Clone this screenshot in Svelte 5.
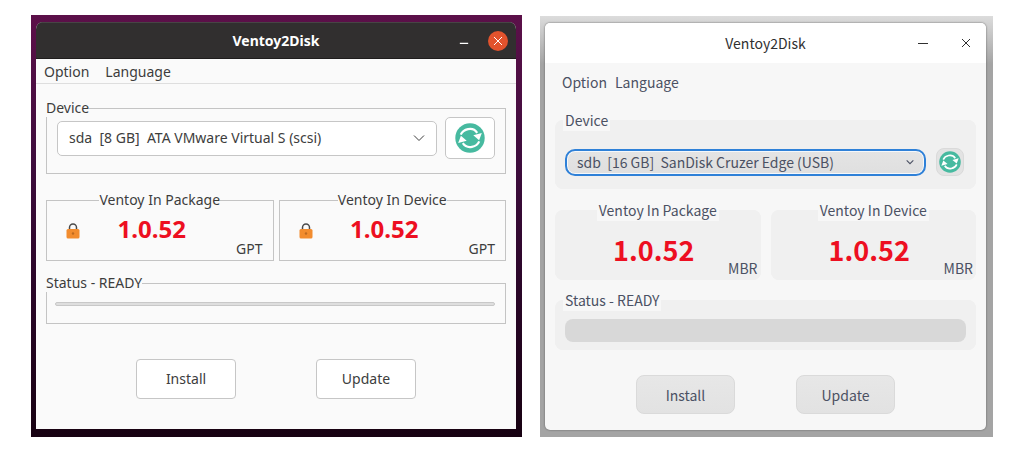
<script lang="ts">
	const windows = [
		{
			theme: 'yaru',
			device: 'sda\u00a0 [8 GB]\u00a0 ATA VMware Virtual S (scsi)',
			style: 'GPT',
			secure: true
		},
		{
			theme: 'deepin',
			device: 'sdb\u00a0 [16 GB]\u00a0 SanDisk Cruzer Edge (USB)',
			style: 'MBR',
			secure: false
		}
	];
	const version = '1.0.52';
	const versionBoxes = ['Ventoy In Package', 'Ventoy In Device'];
</script>

<main>
	{#each windows as win}
		<div class="desktop {win.theme}">
			<section class="window" aria-label="Ventoy2Disk">
				<header>
					<h1>Ventoy2Disk</h1>
					<div class="controls">
						<button class="minimize" aria-label="Minimize">
							<svg viewBox="0 0 12 12"><path d="M1 6.5H11" /></svg>
						</button>
						<button class="close" aria-label="Close">
							<svg viewBox="0 0 12 12"><path d="M2 2L10 10M10 2L2 10" /></svg>
						</button>
					</div>
				</header>

				<nav>
					<button>Option</button>
					<button>Language</button>
				</nav>

				<div class="content">
					<fieldset class="device">
						<legend>Device</legend>
						<div class="device-row">
							<div class="combo">
								<select aria-label="Device">
									<option>{win.device}</option>
								</select>
								<svg class="chevron" viewBox="0 0 12 12"><path d="M1 3.5L6 8.5L11 3.5" /></svg>
							</div>
							<button class="refresh" aria-label="Refresh">
								<svg viewBox="0 0 30 30">
									<circle cx="15" cy="15" r="14.7" fill="#47baa0" />
									<g id="arrow-{win.theme}">
										<path class="arc" d="M5.8 11.7C8 6.4 17.5 2.9 22.2 9.8" />
										<path class="head" d="M18.3 12.3L26.8 9.9L24.1 17.2Z" />
									</g>
									<use href="#arrow-{win.theme}" transform="rotate(180 15 15)" />
								</svg>
							</button>
						</div>
					</fieldset>

					<div class="versions">
						{#each versionBoxes as label}
							<fieldset>
								<legend>{label}</legend>
								<div class="version-row">
									{#if win.secure}
										<svg class="lock" viewBox="0 0 14 16">
											<path d="M3.5 7V4.5a3.5 3.5 0 0 1 7 0V7" fill="none" stroke="#4a4a4a" stroke-width="1.5" />
											<rect x="0.5" y="6" width="13" height="9.5" rx="1.5" fill="#f28c2e" />
											<circle cx="7" cy="10.5" r="1.2" fill="#bd6a20" />
										</svg>
									{/if}
									<strong>{version}</strong>
									<span>{win.style}</span>
								</div>
							</fieldset>
						{/each}
					</div>

					<fieldset class="status">
						<legend>Status - READY</legend>
						<progress value="0" max="100" aria-label="Status"></progress>
					</fieldset>

					<div class="actions">
						<button>Install</button>
						<button>Update</button>
					</div>
				</div>
			</section>
		</div>
	{/each}
</main>

<style>
	:global(body) {
		margin: 0;
		background: #fff;
	}

	main {
		display: grid;
		grid-template-columns: 491fr 453fr;
		gap: 18px;
		align-items: end;
		padding: 15px 21px 30px 31px;
	}

	.desktop {
		box-sizing: border-box;
		min-width: 0;
	}

	.window {
		color: var(--text);
		background: var(--surface);
		overflow: hidden;
	}

	button,
	select {
		font: inherit;
		color: inherit;
		box-sizing: border-box;
	}

	button {
		padding: 0;
		border: none;
		background: none;
	}

	svg {
		display: block;
		fill: none;
		stroke: currentColor;
	}

	header {
		display: grid;
		grid-template-columns: 1fr auto 1fr;
		align-items: center;
	}

	h1 {
		grid-column: 2;
		margin: 0;
		font-size: inherit;
	}

	.controls {
		display: flex;
		justify-content: flex-end;
		align-items: center;
	}

	.controls button {
		display: grid;
		place-items: center;
		width: 20px;
		height: 20px;
	}

	.controls svg {
		width: 12px;
		height: 12px;
	}

	nav {
		display: flex;
	}

	fieldset {
		min-width: 0;
		margin: 0;
		padding: 0;
		border: 1px solid var(--frame);
	}

	.device-row {
		display: flex;
		align-items: center;
	}

	.combo {
		position: relative;
		flex: 1;
		min-width: 0;
	}

	select {
		display: block;
		width: 100%;
		appearance: none;
		outline: none;
	}

	.chevron {
		position: absolute;
		top: 50%;
		translate: 0 -50%;
		pointer-events: none;
	}

	.refresh {
		display: grid;
		place-items: center;
	}

	.refresh circle,
	.head {
		stroke: none;
	}

	.arc {
		stroke: #fff;
		stroke-width: 2.2;
	}

	.head {
		fill: #fff;
	}

	.versions {
		display: grid;
		grid-template-columns: 1fr 1fr;
	}

	.versions legend {
		margin: 0 auto;
	}

	.version-row {
		display: grid;
		grid-template-columns: 52px 1fr 58px;
	}

	.lock {
		grid-column: 1;
		grid-row: 1;
		width: 14px;
		height: 16px;
		margin-top: 14px;
		justify-self: center;
		stroke: none;
	}

	strong {
		grid-column: 2;
		grid-row: 1;
		justify-self: center;
		color: #ed0f21;
		white-space: nowrap;
	}

	.version-row span {
		grid-column: 3;
		align-self: end;
		justify-self: end;
	}

	progress {
		display: block;
		width: 100%;
		appearance: none;
		border: none;
	}

	progress::-webkit-progress-bar {
		background: transparent;
	}

	.actions {
		display: flex;
		justify-content: center;
	}

	/* Ubuntu */
	.yaru {
		--text: #3d3d3d;
		--surface: #fafafa;
		--frame: #c4c4c4;
		padding: 7px 6px 8px 5px;
		background: linear-gradient(#5c1049, #3e0d3d 35%, #2a0628 65%, #180212);
		font: 14px/18px 'Noto Sans', sans-serif;
	}

	.yaru .window {
		border-radius: 7px 7px 0 0;
	}

	.yaru header {
		height: 37px;
		padding: 0 8px;
		box-sizing: border-box;
		color: #fff;
		background: #312f2f;
		border-top: 1px solid #474545;
		border-bottom: 1px solid #1f1d1d;
	}

	.yaru .controls {
		gap: 14px;
	}

	.yaru .minimize svg {
		width: 10px;
		height: 10px;
		margin-top: 4px;
		stroke-width: 1.5;
	}

	.yaru .close {
		border-radius: 50%;
		background: #e2532d;
	}

	.yaru nav {
		gap: 16px;
		padding: 4px 8px 2px;
		border-bottom: 1px solid #dedede;
	}

	.yaru .content {
		padding: 15px 10px 30px;
	}

	.yaru legend {
		padding: 0;
		background: var(--surface);
	}

	.yaru .device legend {
		margin-left: -1px;
	}

	.yaru .status legend {
		margin-left: -9px;
	}

	.yaru .device-row {
		gap: 8px;
		padding: 0 10px 14px;
	}

	.yaru select {
		height: 35px;
		padding: 0 36px 0 11px;
		border: 1px solid #c6c6c6;
		border-radius: 5px;
		background: #fff;
	}

	.yaru .chevron {
		right: 12px;
		width: 12px;
		height: 12px;
	}

	.yaru .refresh {
		width: 50px;
		height: 42px;
		border: 1px solid #c6c6c6;
		border-radius: 5px;
		background: #fff;
	}

	.yaru .refresh svg {
		width: 30px;
		height: 30px;
	}

	.yaru .versions {
		gap: 5px;
		margin: 17px 0 13px;
	}

	.yaru .version-row {
		height: 51px;
		padding-right: 10px;
	}

	.yaru strong {
		font-size: 24px;
		line-height: 40px;
	}

	.yaru .version-row span {
		padding-bottom: 2px;
	}

	.yaru progress {
		box-sizing: border-box;
		height: 4px;
		border: 1px solid #c8c8c8;
		border-radius: 2px;
		background: #dedede;
	}

	.yaru .status {
		padding: 10px 10px 17px 8px;
	}

	.yaru .actions {
		gap: 80px;
		margin-top: 35px;
	}

	.yaru .actions button {
		width: 100px;
		height: 40px;
		border: 1px solid #c6c6c6;
		border-radius: 4px;
		background: #fff;
	}

	/* Deepin */
	.deepin {
		--text: #4b5163;
		--surface: #f7f7f7;
		--frame: #f0f0f0;
		padding: 7px 7px 7px 5px;
		background: linear-gradient(#dcdcdc, #a4a4a4 48px);
		font: 14px/22px 'Noto Sans CJK SC', sans-serif;
	}

	.deepin .window {
		border-radius: 5px;
		box-shadow: 0 0 2px #555;
	}

	.deepin header {
		height: 40px;
		padding: 0 10px;
		color: #303030;
		background: #fff;
	}

	.deepin h1 {
		font-weight: 400;
	}

	.deepin .controls {
		gap: 23px;
	}

	.deepin nav {
		gap: 8px;
		padding: 8px 17px;
	}

	.deepin .content {
		padding: 8px 10px 16px;
	}

	.deepin fieldset {
		border-radius: 8px;
		background: #f0f0f0;
	}

	.deepin legend {
		padding: 0 2px;
		background: var(--surface);
	}

	.deepin .device legend {
		margin-left: 7px;
	}

	.deepin .status legend {
		margin-left: -2px;
	}

	.deepin .device-row {
		gap: 10px;
		padding: 17px 11px 12px 9px;
	}

	.deepin select {
		height: 27px;
		padding: 0 30px 0 10px;
		border: 2px solid #2f81d8;
		border-radius: 10px;
		background: linear-gradient(#e4e4e4, #dfdfdf);
		box-shadow: inset 0 0 0 1px #f5f8fb;
	}

	.deepin .chevron {
		right: 12px;
		width: 8px;
		height: 8px;
		stroke-width: 1.6;
	}

	.deepin .refresh {
		width: 28px;
		height: 28px;
		border: 1px solid #dadada;
		border-radius: 8px;
		background: #e3e3e3;
	}

	.deepin .refresh svg {
		width: 22px;
		height: 22px;
	}

	.deepin .versions {
		gap: 10px;
		margin: 10px 0 9px;
	}

	.deepin .version-row {
		height: 58px;
		padding-right: 2px;
	}

	.deepin strong {
		font-size: 27px;
		line-height: 58px;
	}

	.deepin progress {
		height: 23px;
		border-radius: 8px;
		background: #d8d8d8;
	}

	.deepin .status {
		padding: 8px 9px 7px;
	}

	.deepin .actions {
		gap: 61px;
		margin-top: 25px;
	}

	.deepin .actions button {
		width: 99px;
		height: 39px;
		border: 1px solid #dadada;
		border-radius: 8px;
		background: linear-gradient(#e7e7e7, #e2e2e2);
	}
</style>
